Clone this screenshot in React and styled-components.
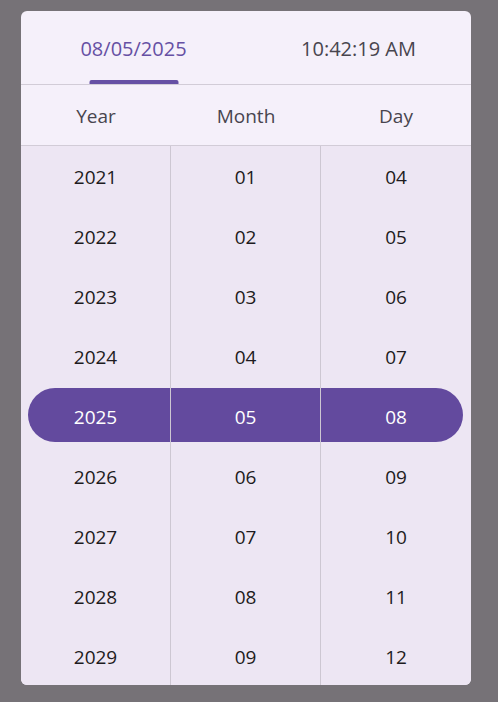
import styled, { createGlobalStyle } from "styled-components";

const years = ["2021", "2022", "2023", "2024", "2025", "2026", "2027", "2028", "2029"];
const months = ["01", "02", "03", "04", "05", "06", "07", "08", "09"];
const days = ["04", "05", "06", "07", "08", "09", "10", "11", "12"];
const SELECTED = 4;

const columns = [
  { title: "Year", items: years },
  { title: "Month", items: months },
  { title: "Day", items: days },
];

const App = () => {
  return (
    <>
      <GlobalStyle />
      <Backdrop>
        <Card>
          <Tabs>
            <Tab active>
              08/05/2025
              <Indicator />
            </Tab>
            <Tab>10:42:19 AM</Tab>
          </Tabs>
          <ColumnHeader>
            {columns.map((col) => (
              <HeaderCell key={col.title}>{col.title}</HeaderCell>
            ))}
          </ColumnHeader>
          <Wheel>
            <SelectionPill />
            {columns.map((col, ci) => (
              <Column key={col.title} last={ci === columns.length - 1}>
                {col.items.map((item, i) => (
                  <Cell key={item} selected={i === SELECTED}>
                    {item}
                  </Cell>
                ))}
              </Column>
            ))}
          </Wheel>
        </Card>
      </Backdrop>
    </>
  );
};

const GlobalStyle = createGlobalStyle`
  body {
    margin: 0;
    background: #767277;
    font-family: "Open Sans", "Noto Sans", sans-serif;
  }
`;

const Backdrop = styled.div`
  width: 498px;
  height: 702px;
  padding: 11px 27px 0 21px;
  box-sizing: border-box;
`;

const Card = styled.div`
  width: 450px;
  height: 674px;
  background: #f5f0fa;
  border-radius: 6px;
  overflow: hidden;
  display: flex;
  flex-direction: column;
`;

const Tabs = styled.div`
  display: grid;
  grid-template-columns: 1fr 1fr;
  height: 73px;
  border-bottom: 1px solid #d2ccd7;
  flex-shrink: 0;
`;

const Tab = styled.div`
  position: relative;
  display: flex;
  align-items: center;
  justify-content: center;
  padding-top: 2px;
  font-size: 20px;
  color: ${({ active }) => (active ? "#6650a4" : "#48454e")};
`;

const Indicator = styled.span`
  position: absolute;
  bottom: 0;
  left: 50%;
  transform: translateX(-50%);
  width: 89px;
  height: 4px;
  border-radius: 2px 2px 0 0;
  background: #6650a4;
`;

const ColumnHeader = styled.div`
  display: grid;
  grid-template-columns: repeat(3, 1fr);
  height: 60px;
  border-bottom: 1px solid #d2ccd7;
  flex-shrink: 0;
`;

const HeaderCell = styled.div`
  display: flex;
  align-items: center;
  justify-content: center;
  padding-top: 2px;
  font-size: 19px;
  color: #48454e;
`;

const Wheel = styled.div`
  position: relative;
  display: grid;
  grid-template-columns: repeat(3, 1fr);
  background: #ede6f3;
`;

const SelectionPill = styled.div`
  position: absolute;
  top: ${SELECTED * 60 + 2}px;
  left: 7px;
  right: 8px;
  height: 54px;
  border-radius: 27px;
  background: #634a9e;
`;

const Column = styled.div`
  position: relative;
  display: flex;
  flex-direction: column;
  border-right: ${({ last }) => (last ? "none" : "1px solid #cdc7d2")};
`;

const Cell = styled.div`
  height: 60px;
  box-sizing: border-box;
  padding-top: 2px;
  display: flex;
  align-items: center;
  justify-content: center;
  font-size: 19px;
  color: ${({ selected }) => (selected ? "#ffffff" : "#1d1b20")};
`;

export default App;
